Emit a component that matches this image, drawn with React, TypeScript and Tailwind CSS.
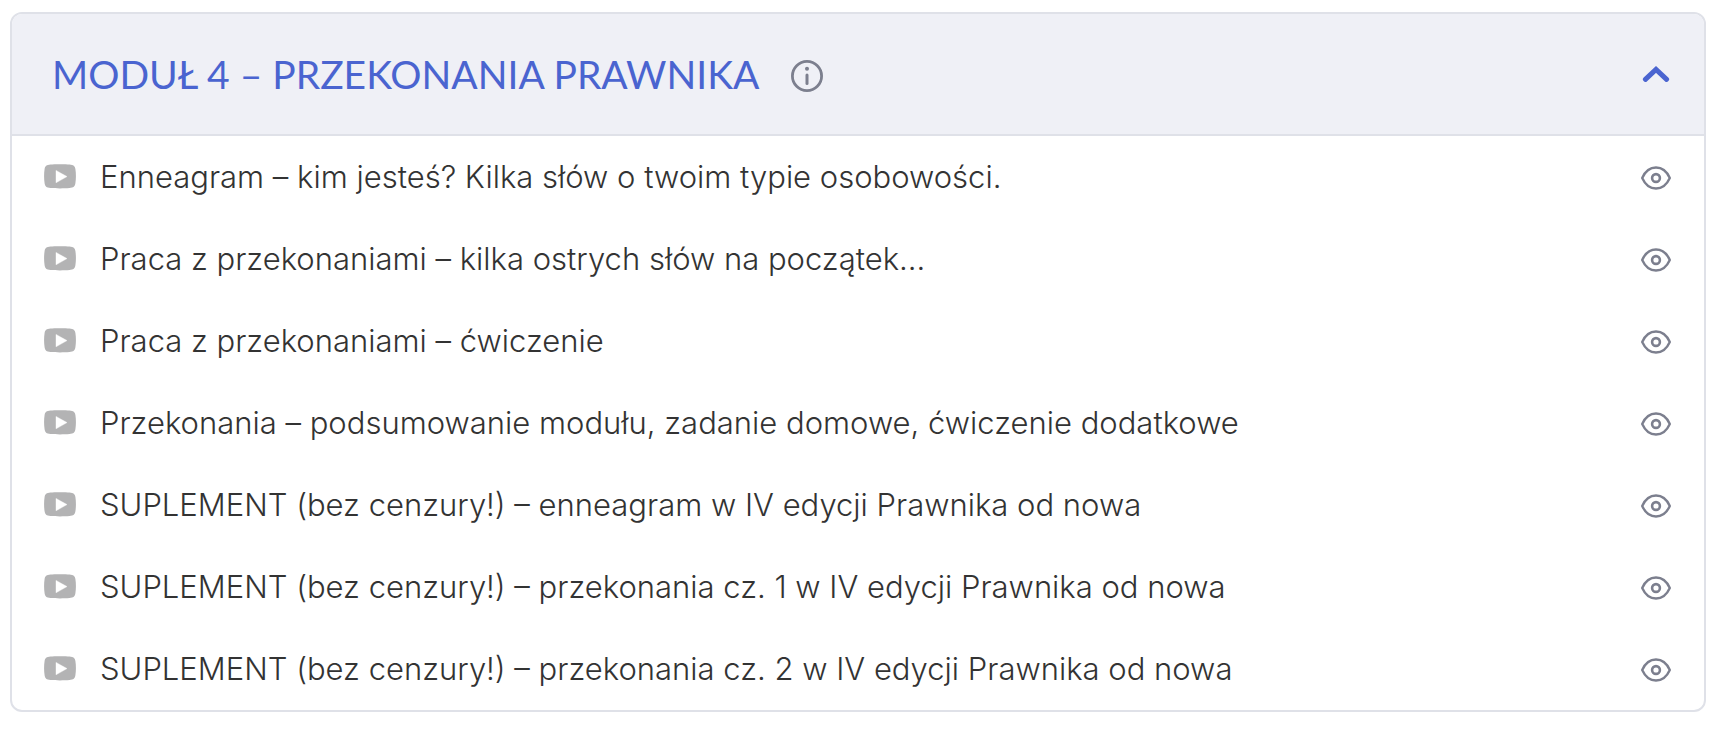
import { useState } from 'react'

// ── Data ────────────────────────────────────────────────────────────────────
const lessons = [
  'Enneagram – kim jesteś? Kilka słów o twoim typie osobowości.',
  'Praca z przekonaniami – kilka ostrych słów na początek…',
  'Praca z przekonaniami – ćwiczenie',
  'Przekonania – podsumowanie modułu, zadanie domowe, ćwiczenie dodatkowe',
  'SUPLEMENT (bez cenzury!) – enneagram w IV edycji Prawnika od nowa',
  'SUPLEMENT (bez cenzury!) – przekonania cz. 1 w IV edycji Prawnika od nowa',
  'SUPLEMENT (bez cenzury!) – przekonania cz. 2 w IV edycji Prawnika od nowa',
]

// ── Icons ───────────────────────────────────────────────────────────────────
function InfoIcon() {
  return (
    <svg width="32" height="32" viewBox="0 0 32 32" fill="none" aria-hidden="true">
      <circle cx="16" cy="16" r="14.6" stroke="currentColor" strokeWidth="2.8" />
      <circle cx="16" cy="8.7" r="2" fill="currentColor" />
      <path d="M16 15v8.6" stroke="currentColor" strokeWidth="3" strokeLinecap="round" />
    </svg>
  )
}

function ChevronIcon({ open }: { open: boolean }) {
  return (
    <svg
      width="28"
      height="18"
      viewBox="0 0 28 18"
      fill="none"
      aria-hidden="true"
      className={open ? '' : 'rotate-180'}
    >
      <path
        d="M3.4 14.4L14 4.4l10.6 10"
        stroke="currentColor"
        strokeWidth="5"
        strokeLinecap="round"
        strokeLinejoin="miter"
      />
    </svg>
  )
}

function PlayIcon() {
  return (
    <svg width="32" height="26" viewBox="0 0 32 26" aria-hidden="true">
      <path
        d="M6.5 .6C10 .1 22 .1 25.500 .6C29.500 .9 31 2.200 31.400 5.100C32.100 9.600 32.100 15 31.400 19.300C31 22.500 29.500 23.700 25.500 24.100C20 24.600 12 24.600 6.500 24.100C2.500 23.700 1 22.500 .6 19.300C-.1 15 -.1 9.600 .6 5.100C1 2.200 2.500 .9 6.500 .6Z"
        fill="#b3b3b4"
      />
      <path d="M12 6.400v12.400L23 12.600z" fill="#fff" stroke="#fff" strokeWidth=".4" />
    </svg>
  )
}

function EyeIcon() {
  return (
    <svg width="30" height="24" viewBox="0 0 30 24" fill="none" aria-hidden="true">
      <path
        d="M1.200 12C4.200 5.300 9.200 1.500 15 1.500S25.800 5.300 28.800 12C25.800 18.700 20.800 22.500 15 22.500S4.200 18.700 1.200 12Z"
        stroke="currentColor"
        strokeWidth="2.400"
        strokeLinejoin="round"
      />
      <circle cx="15" cy="12" r="3.900" stroke="currentColor" strokeWidth="2.600" />
    </svg>
  )
}

// ── Component ───────────────────────────────────────────────────────────────
export default function App() {
  const [open, setOpen] = useState(true)
  const toggle = () => setOpen((o) => !o)

  return (
    <main className="bg-white pt-3 pr-2 pb-5 pl-2.5 font-['Lato',sans-serif]">
      <section className="overflow-hidden rounded-xl border-2 border-[#dfe1e8]">
        <header className="flex h-[122px] items-center border-b-2 border-[#dfe1e8] bg-[#eff0f6] pr-[30px] pl-10">
          <h2 className="text-[39px] leading-12 font-normal text-[#4a64d0]">
            <button type="button" onClick={toggle} aria-expanded={open} className="cursor-pointer text-left">
              MODUŁ 4 – PRZEKONANIA PRAWNIKA
            </button>
          </h2>
          <button type="button" aria-label="Informacje o module" className="ml-8 cursor-pointer pt-1 text-[#7c7f8e]">
            <InfoIcon />
          </button>
          <button
            type="button"
            onClick={toggle}
            aria-label={open ? 'Zwiń moduł' : 'Rozwiń moduł'}
            className="ml-auto cursor-pointer p-1 text-[#4a64d0]"
          >
            <ChevronIcon open={open} />
          </button>
        </header>

        {open && (
          <ul>
            {lessons.map((lesson) => (
              <li key={lesson} className="flex h-[82px] items-center pr-[33px] pl-8">
                <a
                  href="#"
                  className="flex items-center gap-6 font-['Inter',sans-serif] text-[31px] leading-10 font-light text-[#333]"
                >
                  <PlayIcon />
                  <span>{lesson}</span>
                </a>
                <button
                  type="button"
                  aria-label={`Podgląd: ${lesson}`}
                  className="ml-auto cursor-pointer pt-0.5 text-[#7c7f8e]"
                >
                  <EyeIcon />
                </button>
              </li>
            ))}
          </ul>
        )}
      </section>
    </main>
  )
}
